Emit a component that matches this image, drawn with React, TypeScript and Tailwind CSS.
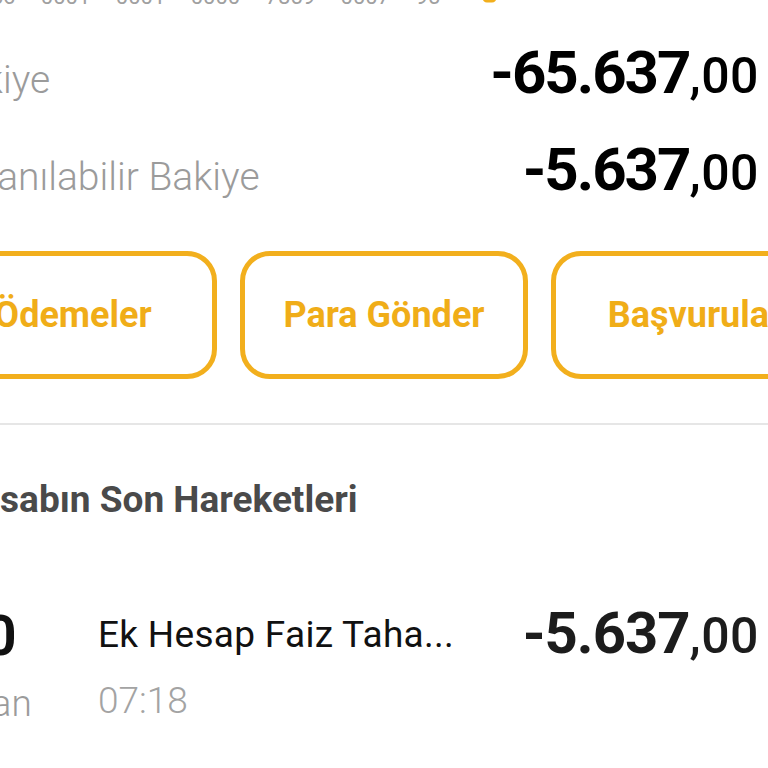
import React from "react";

const Amount = ({ main, dec, cls, size }: { main: string; dec: string; cls: string; size: "lg" | "md" }) => (
  <div className={`flex items-baseline whitespace-nowrap ${cls}`}>
    <span
      className={
        size === "lg"
          ? "text-[60px] leading-[60px] font-bold tracking-[-2px]"
          : "text-[58px] leading-[58px] font-bold tracking-[-1px]"
      }
    >
      {main}
    </span>
    <span className="text-[50px] leading-[58px] font-medium tracking-[0.5px]">{dec}</span>
  </div>
);

export default function App() {
  return (
    <div className="w-[768px] h-[768px] overflow-hidden bg-white font-['Roboto',sans-serif]">
      {/* IBAN line (mostly scrolled off the top) */}
      <div className="flex items-start mt-[-14px] h-[22px] whitespace-nowrap">
        <span className="ml-[-36px] text-[22px] leading-[22px] text-[#a0a0a0] [word-spacing:20px]">
          TR56 0001 0001 0000 7859 0007 95
        </span>
        <svg className="ml-[42px] mt-[-2px]" width="16" height="20" viewBox="0 0 16 20" fill="none">
          <rect x="2" y="2" width="11" height="15" rx="3" stroke="#F2AF1D" strokeWidth="3" />
        </svg>
      </div>

      {/* Balances */}
      <div className="mt-[35px] flex items-baseline justify-between pr-[9px] h-[60px]">
        <span className="ml-[-61px] text-[39px] leading-[60px] font-light text-[#9b9b9b] whitespace-nowrap">
          Bakiye
        </span>
        <Amount main="-65.637" dec=",00" cls="text-black" size="lg" />
      </div>
      <div className="mt-[37px] flex items-baseline justify-between pr-[9px] h-[60px]">
        <span className="ml-[-66px] text-[39px] leading-[60px] font-light text-[#9b9b9b] whitespace-nowrap">
          Kullanılabilir Bakiye
        </span>
        <Amount main="-5.637" dec=",00" cls="text-black" size="lg" />
      </div>

      {/* Action buttons */}
      <div className="mt-[51px] flex gap-[23px] ml-[-71px] w-max">
        {["Ödemeler", "Para Gönder", "Başvurular"].map((t) => (
          <div
            key={t}
            className="w-[288px] h-[128px] border-[5px] border-[#F2AF1D] rounded-[30px] flex items-center justify-center"
          >
            <span className="text-[36px] font-bold text-[#F0AD18] whitespace-nowrap">{t}</span>
          </div>
        ))}
      </div>

      {/* Divider */}
      <div className="mt-[44px] h-[2px] bg-[#e6e6e6]" />

      {/* Heading */}
      <div className="mt-[56px] ml-[-46px] text-[37px] leading-[37px] font-bold text-[#4a4a4a] whitespace-nowrap">
        Hesabın Son Hareketleri
      </div>

      {/* Transaction */}
      <div className="mt-[86px] flex items-start pr-[9px]">
        <div className="ml-[-75px] w-[120px] flex flex-col items-center shrink-0">
          <span className="text-[55px] leading-[55px] font-bold text-[#111] mt-[5px]">30</span>
          <span className="text-[37px] leading-[37px] font-light text-[#9b9b9b] mt-[21px]">Nisan</span>
        </div>
        <div className="ml-[53px] flex flex-col pt-[12px] flex-1 min-w-0">
          <span className="text-[37px] leading-[37px] tracking-[0.3px] text-[#111] whitespace-nowrap">
            Ek Hesap Faiz Taha...
          </span>
          <span className="text-[37px] leading-[37px] font-light text-[#a3a3a3] mt-[29px]">07:18</span>
        </div>
        <Amount main="-5.637" dec=",00" cls="text-[#1c1c1c]" size="md" />
      </div>
    </div>
  );
}
